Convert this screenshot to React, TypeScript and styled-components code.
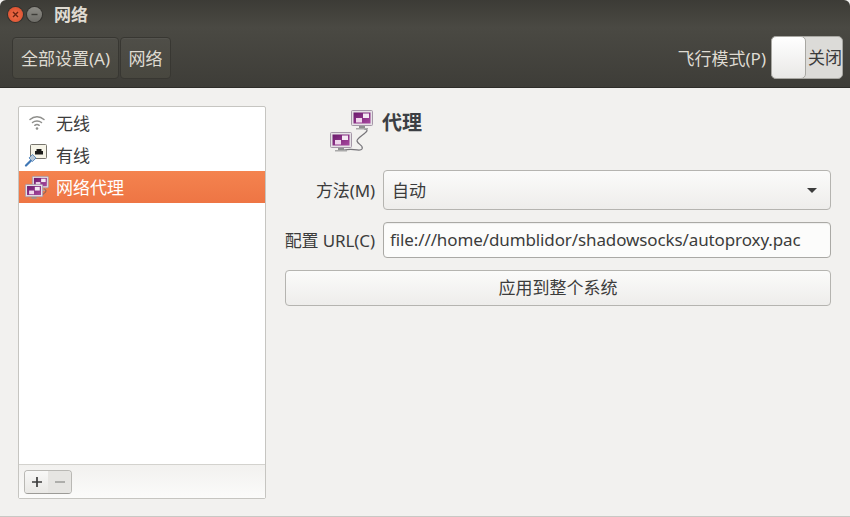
import React from "react";
import styled, { createGlobalStyle } from "styled-components";

const FONT = `"Noto Sans", "Noto Sans CJK SC", sans-serif`;

const Global = createGlobalStyle`
  html, body { margin: 0; padding: 0; background: #f2f1ef; }
  * { box-sizing: border-box; }
  body { font-family: ${FONT}; overflow: hidden; }
`;

const Window = styled.div`
  width: 850px;
  height: 517px;
  display: flex;
  flex-direction: column;
  background: #f2f1ef;
  border-bottom: 1px solid #c9c8c4;
`;
const TitleBar = styled.div`
  height: 28px;
  flex: none;
  display: flex;
  align-items: center;
  padding-left: 8px;
  background: linear-gradient(#3c3b36, #4a4943);
  border-radius: 6px 6px 0 0;
`;
const WinButton = styled.div<{ $kind: "close" | "min" }>`
  width: 15px;
  height: 15px;
  border-radius: 50%;
  margin-right: 4px;
  display: flex;
  align-items: center;
  justify-content: center;
  background: ${(p) =>
    p.$kind === "close"
      ? "radial-gradient(circle at 50% 55%, #f0704a, #d8492a)"
      : "linear-gradient(#8c8b85, #6e6d68)"};
  box-shadow: 0 0 0 1px #33322e;
`;
const Title = styled.div`
  margin: 1px 0 0 8px;
  color: #dfdbd2;
  font-size: 17px;
  font-weight: 700;
  line-height: 28px;
`;
const ToolBar = styled.div`
  height: 60px;
  flex: none;
  display: flex;
  align-items: center;
  padding: 0 7px 0 12px;
  background: linear-gradient(#4a4943, #3e3d38);
  border-bottom: 1px solid #2e2d29;
`;
const Crumb = styled.div<{ $w: number }>`
  width: ${(p) => p.$w}px;
  height: 42px;
  margin: 1px 1px 0 0;
  padding-bottom: 1px;
  display: flex;
  align-items: center;
  justify-content: center;
  color: #dfdbd2;
  font-size: 17px;
  border: 1px solid #383732;
  border-radius: 4px;
  background: linear-gradient(#4f4e48, #48473f);
  box-shadow: inset 0 1px 0 rgba(255, 255, 255, 0.04);
`;
const Spacer = styled.div`
  flex: 1;
`;
const AirLabel = styled.div`
  color: #dfdbd2;
  font-size: 17px;
  margin-right: 5px;
  white-space: nowrap;
`;
const Switch = styled.div`
  width: 72px;
  height: 43px;
  display: flex;
  justify-content: flex-end;
  position: relative;
  border-radius: 5px;
  border: 1px solid #a8a7a2;
  background: #dcdbd8;
`;
const SwitchThumb = styled.div`
  position: absolute;
  left: -1px;
  top: -1px;
  width: 35px;
  height: 43px;
  border-radius: 5px;
  border: 1px solid #a8a7a2;
  background: linear-gradient(#ffffff, #e9e8e6);
`;
const SwitchText = styled.div`
  line-height: 41px;
  font-size: 17px;
  color: #3c3c3c;
  white-space: nowrap;
`;
const Body = styled.div`
  flex: 1;
  display: flex;
  padding: 18px 19px 17px 18px;
`;
const Side = styled.div`
  width: 248px;
  display: flex;
  flex-direction: column;
  border: 1px solid #c6c5c1;
  border-radius: 2px;
  background: #fff;
`;
const List = styled.div`
  flex: 1;
`;
const Row = styled.div<{ $on?: boolean }>`
  height: 32px;
  display: flex;
  align-items: center;
  padding: 0 0 2px 5px;
  font-size: 17px;
  color: ${(p) => (p.$on ? "#fff" : "#3c3c3c")};
  background: ${(p) => (p.$on ? "linear-gradient(#f4834f, #ee7544)" : "none")};
`;
const RowIcon = styled.div`
  width: 25px;
  height: 24px;
  margin: 2px 7px 0 0;
  display: flex;
  align-items: center;
  justify-content: center;
`;
const SideBar = styled.div`
  height: 34px;
  flex: none;
  display: flex;
  align-items: center;
  padding-left: 5px;
  border-top: 1px solid #d3d2ce;
  background: linear-gradient(#f2f1ef, #fbfbfa);
`;
const MiniGroup = styled.div`
  display: flex;
  height: 24px;
  border: 1px solid #b9b8b4;
  border-bottom-color: #9c9b97;
  border-radius: 4px;
`;
const MiniBtn = styled.div<{ $off?: boolean }>`
  width: 23px;
  display: flex;
  align-items: center;
  justify-content: center;
  color: ${(p) => (p.$off ? "#a5a4a1" : "#3c3c3c")};
  border-radius: ${(p) => (p.$off ? "0 3px 3px 0" : "3px 0 0 3px")};
  background: ${(p) => (p.$off ? "#e6e5e2" : "linear-gradient(#f8f8f7, #e9e8e5)")};
`;
const Main = styled.div`
  flex: 1;
  padding-left: 19px;
  display: flex;
  flex-direction: column;
`;
const Head = styled.div`
  height: 64px;
  display: flex;
  align-items: flex-start;
  padding: 2px 0 0 45px;
`;
const HeadIcon = styled.div`
  width: 44px;
  height: 46px;
  margin-right: 8px;
  flex: none;
`;
const HeadText = styled.div`
  font-size: 20px;
  font-weight: 700;
  color: #3c3f44;
  line-height: 30px;
`;
const Field = styled.div<{ $mb: number }>`
  display: flex;
  align-items: center;
  margin-bottom: ${(p) => p.$mb}px;
`;
const Label = styled.div`
  width: 91px;
  margin: 0 8px 2px -1px;
  text-align: right;
  font-size: 17px;
  letter-spacing: -0.1px;
  color: #3c3c3c;
  white-space: nowrap;
`;
const Combo = styled.div`
  flex: 1;
  height: 40px;
  display: flex;
  align-items: center;
  justify-content: space-between;
  padding: 0 13px 2px 8px;
  font-size: 17px;
  color: #3c3c3c;
  border: 1px solid #b5b4b0;
  border-radius: 4px;
  background: linear-gradient(#fbfbfa, #eeedeb);
`;
const Arrow = styled.div`
  width: 0;
  height: 0;
  margin-top: 2px;
  border-left: 5.5px solid transparent;
  border-right: 5.5px solid transparent;
  border-top: 5.5px solid #3c3c3c;
`;
const Input = styled.div`
  flex: 1;
  height: 36px;
  display: flex;
  align-items: center;
  padding: 0 0 2px 6px;
  font-size: 17px;
  letter-spacing: -0.11px;
  color: #3c3c3c;
  border: 1px solid #aaa9a5;
  border-radius: 4px;
  background: #fcfcfb;
  box-shadow: inset 0 1px 1px rgba(0, 0, 0, 0.06);
  white-space: nowrap;
`;
const Apply = styled.div`
  height: 36px;
  display: flex;
  align-items: center;
  justify-content: center;
  padding-bottom: 3px;
  font-size: 17px;
  color: #3c3c3c;
  border: 1px solid #b5b4b0;
  border-radius: 4px;
  background: linear-gradient(#fbfbfa, #eeedeb);
`;

const Monitor = ({ x, y, s = 1, id }: { x: number; y: number; s?: number; id: string }) => (
  <g transform={`translate(${x} ${y}) scale(${s})`}>
    <defs>
      <linearGradient id={id} x1="0" y1="0" x2="1" y2="1">
        <stop offset="0" stopColor="#6b1a6c" />
        <stop offset="1" stopColor="#a8489f" />
      </linearGradient>
    </defs>
    <rect x="0.5" y="0.5" width="21" height="15" rx="1" fill="#e6e2e6" stroke="#a597a8" />
    <rect x="2.5" y="2.5" width="17" height="11" fill={`url(#${id})`} />
    <rect x="12" y="3.500" width="6" height="4.500" fill="#f4e8f3" />
    <rect x="5" y="8" width="6" height="4.500" fill="#efd6ec" />
    <rect x="8" y="16" width="6" height="2" fill="#8f8f8f" />
    <rect x="5" y="18" width="12" height="1.500" fill="#a9a9a9" />
  </g>
);

const ProxyIcon = () => (
  <svg width="44" height="46" viewBox="0 0 44 46">
    <path d="M34 21 C44 22 26 29 27 33 C28 37 34 37 32 41 C30 44 26 40 14 42" fill="none" stroke="#77757a" strokeWidth="1.200" />
    <Monitor id="pa" x={21} y={2} />
    <Monitor id="pb" x={0} y={24} />
  </svg>
);

const SmallProxyIcon = () => (
  <svg width="25" height="24" viewBox="0 0 25 24">
    <path d="M20 14 C24 15 21 19 17 20" fill="none" stroke="#6a5a60" strokeWidth="1" />
    <Monitor id="sa" x={8} y={1} s={0.76} />
    <Monitor id="sb" x={1} y={9} s={0.82} />
  </svg>
);

const WifiIcon = () => (
  <svg width="20" height="20" viewBox="0 0 20 20" fill="none" stroke="#8f8f8c" strokeWidth="1.500" strokeLinecap="round">
    <path d="M3 6.500 C7 2.800 13 2.800 17 6.500" />
    <path d="M5.500 9.500 C8 7.400 12 7.400 14.500 9.500" />
    <path d="M7.800 12.300 C9 11.400 11 11.400 12.200 12.300" />
    <circle cx="10" cy="15.500" r="1.300" fill="#8f8f8c" stroke="none" />
  </svg>
);

const WiredIcon = () => (
  <svg width="25" height="24" viewBox="0 0 25 24">
    <rect x="6.500" y="1.500" width="16" height="14" rx="1" fill="#f6f4e8" stroke="#77756d" />
    <path d="M11 11.500V8h1.500V6h5v2H19v3.500z" fill="#1d1d1b" />
    <path d="M2 22.500 L7 17.500" stroke="#3f77b5" strokeWidth="2.200" strokeLinecap="round" />
    <rect x="6" y="12.500" width="5" height="5" fill="#b9c9d8" stroke="#4a7fb8" strokeWidth="0.800" transform="rotate(45 8.500 15)" />
  </svg>
);

const PlusIcon = () => (
  <svg width="10" height="10" viewBox="0 0 10 10" stroke="currentColor" strokeWidth="1.700"><path d="M0 5h10M5 0v10" /></svg>
);
const MinusIcon = () => (
  <svg width="10" height="10" viewBox="0 0 10 10" stroke="currentColor" strokeWidth="1.700"><path d="M0 5h10" /></svg>
);

export default function App() {
  return (
    <Window>
      <Global />
      <TitleBar>
        <WinButton $kind="close">
          <svg width="7" height="7" viewBox="0 0 7 7" stroke="#6b2312" strokeWidth="1.400"><path d="M1 1l5 5M6 1L1 6" /></svg>
        </WinButton>
        <WinButton $kind="min">
          <svg width="7" height="7" viewBox="0 0 7 7" stroke="#3e3d39" strokeWidth="1.400"><path d="M0.500 3.500h6" /></svg>
        </WinButton>
        <Title>网络</Title>
      </TitleBar>
      <ToolBar>
        <Crumb $w={107}>全部设置(A)</Crumb>
        <Crumb $w={51}>网络</Crumb>
        <Spacer />
        <AirLabel>飞行模式(P)</AirLabel>
        <Switch>
          <SwitchThumb />
          <SwitchText>关闭</SwitchText>
        </Switch>
      </ToolBar>
      <Body>
        <Side>
          <List>
            <Row><RowIcon><WifiIcon /></RowIcon>无线</Row>
            <Row><RowIcon><WiredIcon /></RowIcon>有线</Row>
            <Row $on><RowIcon><SmallProxyIcon /></RowIcon>网络代理</Row>
          </List>
          <SideBar>
            <MiniGroup>
              <MiniBtn><PlusIcon /></MiniBtn>
              <MiniBtn $off><MinusIcon /></MiniBtn>
            </MiniGroup>
          </SideBar>
        </Side>
        <Main>
          <Head>
            <HeadIcon><ProxyIcon /></HeadIcon>
            <HeadText>代理</HeadText>
          </Head>
          <Field $mb={12}>
            <Label>方法(M)</Label>
            <Combo>自动<Arrow /></Combo>
          </Field>
          <Field $mb={12}>
            <Label>配置 URL(C)</Label>
            <Input>file:///home/dumblidor/shadowsocks/autoproxy.pac</Input>
          </Field>
          <Apply>应用到整个系统</Apply>
        </Main>
      </Body>
    </Window>
  );
}
